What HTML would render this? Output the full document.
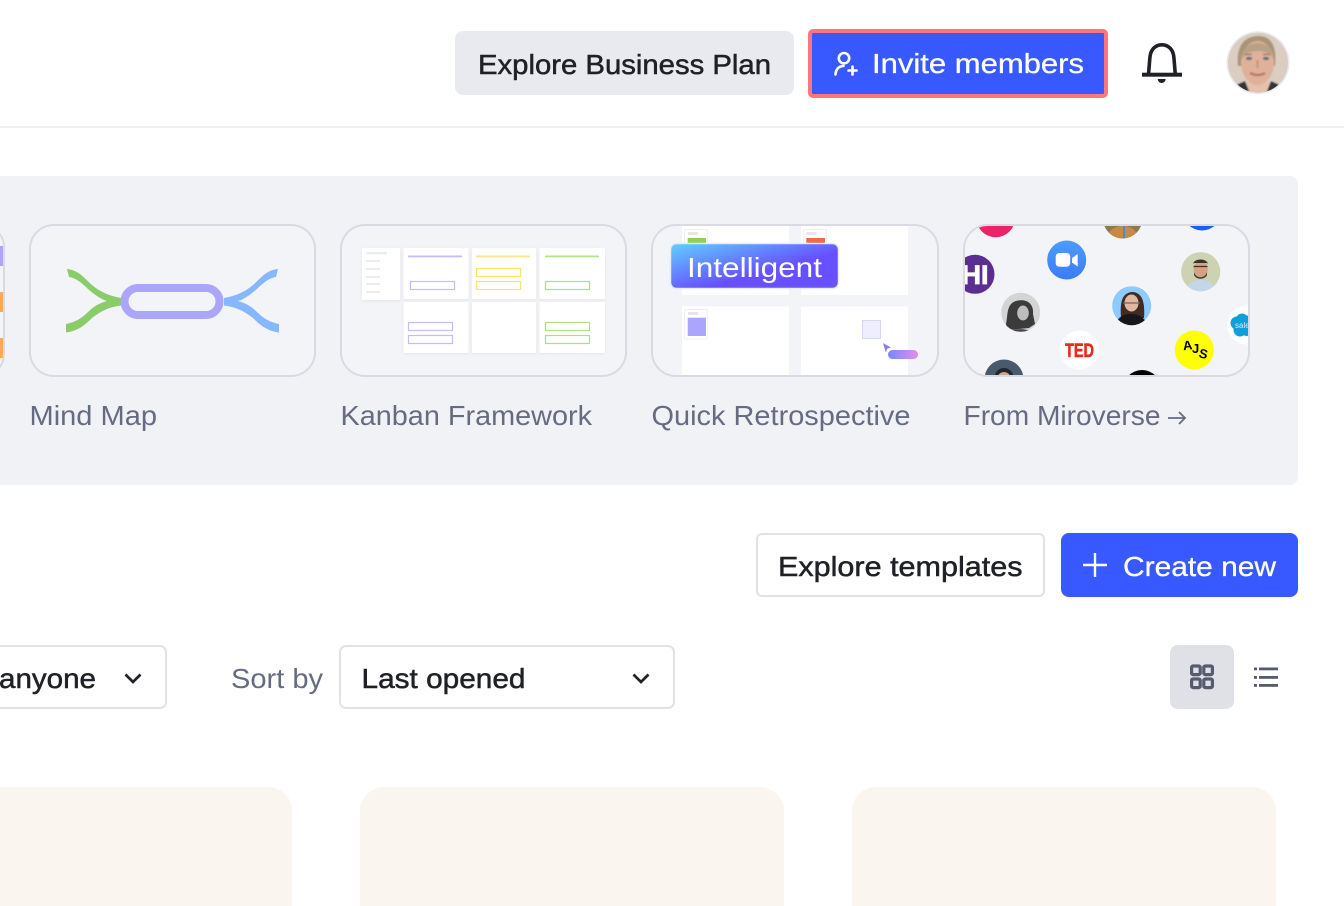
<!DOCTYPE html>
<html lang="en"><head><meta charset="utf-8"><title>Dashboard</title>
<style>
html,body{margin:0;padding:0;background:#fff;width:1344px;height:906px;overflow:hidden}
svg{display:block}
text{font-family:"Liberation Sans",sans-serif;font-size:28px;white-space:pre}
.d{fill:#1f2126;stroke:#1f2126;stroke-width:.5}
.w{fill:#fff;stroke:#fff;stroke-width:.3}
.g{fill:#656b81}
</style></head><body>
<svg width="1344" height="906" viewBox="0 0 1344 906" xmlns="http://www.w3.org/2000/svg">
<defs>
<linearGradient id="badge" x1="0" y1="0" x2="1" y2="1"><stop offset="0" stop-color="#60d0ff"/><stop offset=".6" stop-color="#6650ff"/><stop offset="1" stop-color="#6650ff"/></linearGradient>
<linearGradient id="pill" x1="0" y1="0" x2="1" y2="0"><stop offset="0" stop-color="#7489ff"/><stop offset="1" stop-color="#e58bef"/></linearGradient>
<linearGradient id="zoom" x1="0" y1="0" x2="0" y2="1"><stop offset="0" stop-color="#4f9bff"/><stop offset="1" stop-color="#3a7bfa"/></linearGradient>
<clipPath id="c-retro"><rect x="652" y="225" width="286" height="151" rx="24"/></clipPath>
<clipPath id="c-verse"><rect x="964" y="225" width="285" height="151" rx="24"/></clipPath>
<clipPath id="c-av"><circle cx="1258" cy="62.7" r="30"/></clipPath>
<clipPath id="c1"><circle cx="1200.7" cy="271.7" r="19.5"/></clipPath>
<clipPath id="c2"><circle cx="1020.7" cy="312.3" r="19.5"/></clipPath>
<clipPath id="c3"><circle cx="1131.7" cy="305.7" r="19.5"/></clipPath>
<clipPath id="c4"><circle cx="1122.7" cy="219" r="19.5"/></clipPath>
<clipPath id="c5"><circle cx="1004" cy="379" r="19.5"/></clipPath>
<filter id="sh" x="-10%" y="-10%" width="120%" height="125%"><feDropShadow dx="0" dy="1" stdDeviation="1.5" flood-color="#000" flood-opacity=".06"/></filter>
<filter id="soft"><feGaussianBlur stdDeviation=".35"/></filter>
<filter id="softer"><feGaussianBlur stdDeviation=".9"/></filter>
</defs>

<!-- header -->
<rect x="0" y="0" width="1344" height="127" fill="#fff"/>
<rect x="0" y="126" width="1344" height="2" fill="#f0f1f5"/>
<rect x="455" y="31" width="339" height="64" rx="8" fill="#e9eaef"/>
<text class="d" x="478" y="74" textLength="293" lengthAdjust="spacingAndGlyphs">Explore Business Plan</text>
<rect x="810" y="31" width="296" height="65" rx="3" fill="#3859ff" stroke="#ff757d" stroke-width="4"/>
<g fill="none" stroke="#fff" stroke-width="2.6" stroke-linecap="round">
<circle cx="844" cy="58.2" r="5.2"/>
<path d="M835.5 74.5c.4-5.6 3.4-8.4 8-8.6"/>
<path d="M848.500 70.500h8M852.500 66.500v8"/>
</g>
<text class="w" x="872" y="73" textLength="212" lengthAdjust="spacingAndGlyphs">Invite members</text>

<!-- bell -->
<path d="M1148.5 74.5l1.4-17c.7-8 5.400-12.700 12-12.700s11.300 4.700 12 12.700l1.400 17" fill="none" stroke="#1f2126" stroke-width="3.600"/>
<rect x="1142" y="72.700" width="40" height="4" fill="#1f2126"/>
<path d="M1157.700 79h8c-.3 2.600-2 4-4 4s-3.700-1.400-4-4z" fill="#1f2126"/>

<!-- avatar -->
<circle cx="1258" cy="62.700" r="31.500" fill="#e8e9ee"/>
<g clip-path="url(#c-av)">
<g filter="url(#softer)">
<rect x="1226" y="31" width="64" height="64" fill="#dccdc3"/>
<path d="M1238 66c-2-17 4-29 19-30 16-1 20 13 18 30z" fill="#a99478"/>
<path d="M1244 95l0-13h27v13z" fill="#e6c1ab"/>
<path d="M1232 96l4-11 9-4 6 15zM1284 96l-4-11-9-4-6 15z" fill="#2d3439"/>
<ellipse cx="1257.500" cy="63" rx="16.500" ry="22" fill="#e0b19a"/>
<path d="M1241 60c0-10 7-17 16-17s17 6 17 16c-3-5-9-8-17-8-7 0-12 3-16 9z" fill="#b9a186"/>
<ellipse cx="1249" cy="58.500" rx="3.200" ry="1.600" fill="#5f7280"/>
<ellipse cx="1266" cy="58.500" rx="3.200" ry="1.600" fill="#5f7280"/>
<path d="M1245 54.500h7M1263 54.500h7" stroke="#94745f" stroke-width="1.300"/>
<path d="M1257.500 60v8" stroke="#c9937c" stroke-width="2.200"/>
<path d="M1250 73c5 2.600 11 2.600 15 0" stroke="#b87767" stroke-width="2.400" fill="none"/>
</g>
</g>

<!-- panel -->
<path d="M0 176H1290a8 8 0 0 1 8 8V477a8 8 0 0 1-8 8H0z" fill="#f1f2f6"/>

<!-- clipped card -->
<rect x="-100" y="225" width="104" height="151" rx="22" fill="#f3f4f8" stroke="#d9dae2" stroke-width="2"/>
<rect x="0" y="246" width="3" height="20" fill="#aba5fb"/>
<rect x="0" y="292" width="3" height="20" fill="#ffa95c"/>
<rect x="0" y="338" width="3" height="20" fill="#ffa95c"/>

<!-- mind map -->
<rect x="30" y="225" width="285" height="151" rx="24" fill="#f3f4f8" stroke="#d9dae2" stroke-width="2"/>
<path d="M67 269C79 270 85 279 92 285C100 292 110 296 121 298L121 305.500C108 307 100 312 92 318C85 325 78 331 66 332.500L66 324C76 322 82 318 88 312C94 306 100 303 107 301C100 299 94 294 88 289C82 283 76 278 69 277Z" fill="#8acb6a"/>
<path d="M278 269C266 270 260 279 253 285C245 292 235 296 224 298L224 305.500C237 307 245 312 253 318C260 325 267 331 279 332.500L279 324C269 322 263 318 257 312C251 306 245 303 238 301C245 299 251 294 257 289C263 283 269 278 276 277Z" fill="#86b8ff"/>
<rect x="124.500" y="288" width="95" height="27" rx="13.500" fill="#f3f4f8" stroke="#aba5fb" stroke-width="8"/>
<text class="g" x="29.500" y="425" textLength="127.500" lengthAdjust="spacingAndGlyphs">Mind Map</text>

<!-- kanban -->
<rect x="341" y="225" width="285" height="151" rx="24" fill="#f3f4f8" stroke="#d9dae2" stroke-width="2"/>
<g filter="url(#soft)">
<g fill="#fff" filter="url(#sh)">
<rect x="362" y="248" width="38" height="52"/>
<rect x="403.500" y="248" width="65" height="51" rx="1"/>
<rect x="472" y="248" width="64" height="51" rx="1"/>
<rect x="539.500" y="248" width="65.500" height="51" rx="1"/>
<rect x="403.500" y="302" width="65" height="51" rx="1"/>
<rect x="472" y="302" width="64" height="51" rx="1"/>
<rect x="539.500" y="302" width="65.500" height="51" rx="1"/>
</g>
<g fill="#ececee"><rect x="366" y="252" width="21" height="2.500"/>
<rect x="366" y="260" width="14" height="2"/><rect x="366" y="268" width="14" height="2"/><rect x="366" y="276" width="14" height="2"/><rect x="366" y="283" width="14" height="2"/><rect x="366" y="291" width="14" height="2"/></g>
<rect x="408" y="255.500" width="54" height="1.800" fill="#c7bdfc"/>
<rect x="476" y="255.500" width="54" height="1.800" fill="#fbe48a"/>
<rect x="545" y="255.500" width="54" height="1.800" fill="#b4e08f"/>
<g fill="#fff" stroke-width="1.200">
<g stroke="#c5bcfd"><rect x="410.500" y="281.500" width="44" height="8"/><rect x="408.500" y="322.500" width="44" height="8"/><rect x="408.500" y="335.500" width="44" height="8"/></g>
<g stroke="#fde06a"><rect x="476.500" y="268.500" width="44" height="8"/><rect x="476.500" y="281.500" width="44" height="8"/></g>
<g stroke="#aee083"><rect x="545.500" y="281.500" width="44" height="8"/><rect x="545.500" y="322.500" width="44" height="8"/><rect x="545.500" y="335.500" width="44" height="8"/></g>
</g>
</g>
<text class="g" x="340.500" y="425" textLength="251.500" lengthAdjust="spacingAndGlyphs">Kanban Framework</text>

<!-- retro -->
<rect x="652" y="225" width="286" height="151" rx="24" fill="#f3f4f8"/>
<g clip-path="url(#c-retro)">
<g fill="#fff">
<rect x="682" y="225" width="107" height="70"/><rect x="801" y="225" width="107" height="70"/>
<rect x="682" y="306.500" width="107" height="70"/><rect x="801" y="306.500" width="107" height="70"/>
</g>
<rect x="684.500" y="229.500" width="23" height="16" fill="#fff" stroke="#f1f1f3"/>
<rect x="803.500" y="229.500" width="23" height="16" fill="#fff" stroke="#f1f1f3"/>
<rect x="688" y="232" width="10" height="3" fill="#e6e6e8"/><rect x="806.500" y="232" width="10" height="3" fill="#e6e6e8"/>
<rect x="687.700" y="238" width="18.300" height="6" fill="#8ed154"/>
<rect x="806.300" y="238" width="18.700" height="6" fill="#f2674f"/>
<rect x="684.500" y="309.500" width="23" height="29.500" fill="#fff" stroke="#f1f1f3"/>
<rect x="688" y="312" width="10" height="3" fill="#e6e6e8"/>
<rect x="687.700" y="317.700" width="18.300" height="18.300" fill="#aba5fb"/>
<rect x="862.500" y="320.500" width="18" height="18" fill="#efeefe" stroke="#d9d6fd"/>
<path d="M883 343l8 4.500-3.800 1.100-1.400 3.900z" fill="#8f79f7"/>
<rect x="888" y="350" width="30" height="9" rx="4.500" fill="url(#pill)"/>
</g>
<rect x="652" y="225" width="286" height="151" rx="24" fill="none" stroke="#d9dae2" stroke-width="2"/>
<rect x="670.500" y="243.500" width="168" height="45" rx="6" fill="url(#badge)" stroke="#e9e9f1" stroke-width="1.500"/>
<text x="687" y="277" textLength="135" lengthAdjust="spacingAndGlyphs" fill="#fff">Intelligent</text>
<text class="g" x="651.500" y="425" textLength="259" lengthAdjust="spacingAndGlyphs">Quick Retrospective</text>

<!-- miroverse -->
<rect x="964" y="225" width="285" height="151" rx="24" fill="#f3f4f8"/>
<g clip-path="url(#c-verse)">
<g filter="url(#soft)">
<circle cx="995.700" cy="217.700" r="19.500" fill="#ee2468"/>
<circle cx="1202" cy="211" r="19.500" fill="#1463f3"/>
<circle cx="1122.700" cy="219" r="19.500" fill="#8c7a4e"/>
<g clip-path="url(#c4)"><path d="M1106 240c2-10 9-14 17-14s14 4 16 14z" fill="#c78a45"/><path d="M1124 226v14" stroke="#4c8ad0" stroke-width="2"/></g>
<circle cx="975" cy="274.300" r="19.500" fill="#5c2d91"/>
<text x="961.500" y="284" font-weight="700" textLength="27" lengthAdjust="spacingAndGlyphs" style="font-size:26.500px" fill="#fff" stroke="#fff" stroke-width=".8">HI</text>
<circle cx="1066.700" cy="260" r="19.500" fill="url(#zoom)"/>
<rect x="1055.700" y="253" width="14.500" height="13.700" rx="3.500" fill="#fff"/><path d="M1072 258l5.700-4v12.500l-5.700-4z" fill="#fff"/>

<circle cx="1200.700" cy="271.700" r="19.500" fill="#cfd4b4"/>
<g clip-path="url(#c1)"><rect x="1181" y="252" width="40" height="40" fill="#cdd2b2"/>
<path d="M1186 292c1-8 7-12 15-12s14 4 15 12z" fill="#c6d6ea"/>
<ellipse cx="1200.700" cy="269" rx="7" ry="9" fill="#d4a386"/>
<path d="M1193 264c1-6 14-6 15 0l-1-1h-13z" fill="#3a332e"/>
<path d="M1193.500 266.500h14" stroke="#3a332e" stroke-width="1.300"/>
<path d="M1194 272c2 7 11 7 13 0v3c-2 5-11 5-13 0z" fill="#4c3f36"/></g>

<circle cx="1020.700" cy="312.300" r="19.500" fill="#d4d4d4"/>
<g clip-path="url(#c2)"><path d="M1006 324c2-8 0-20 10-23 12-3 18 4 17 13l2 10-6 4-22 2z" fill="#3a3a3a"/>
<ellipse cx="1023" cy="313" rx="5.800" ry="7.500" fill="#bdbdbd"/>
<path d="M1005 334c3-6 24-7 30 0z" fill="#484848"/></g>

<circle cx="1131.700" cy="305.700" r="19.500" fill="#8dcbfd"/>
<g clip-path="url(#c3)"><path d="M1121 318c-1-14 0-25 11-26 11 0 13 12 12 26z" fill="#3f2b24"/>
<ellipse cx="1131.500" cy="303" rx="7" ry="8.500" fill="#e0b7a1"/>
<path d="M1123 303h17" stroke="#74635d" stroke-width="1.200"/>
<path d="M1115 326c2-9 9-12 16-12s14 3 17 12z" fill="#15151a"/></g>

<circle cx="1246.700" cy="325" r="19.500" fill="#fff"/>
<g fill="#11a0db"><circle cx="1237" cy="323" r="6.500"/><circle cx="1242" cy="319.500" r="6"/><circle cx="1248" cy="322" r="6.500"/><circle cx="1240" cy="330" r="6.500"/><circle cx="1247" cy="330" r="6"/></g>
<text x="1235" y="328" style="font-size:8px" fill="#cfeefa">sales</text>

<circle cx="1079.300" cy="350" r="19.500" fill="#fff"/>
<text x="1065" y="357" font-weight="700" textLength="29" lengthAdjust="spacingAndGlyphs" style="font-size:19px" fill="#e62b1e" stroke="#e62b1e" stroke-width=".6">TED</text>

<circle cx="1194.300" cy="350" r="19.500" fill="#ffff00"/>
<text x="1183" y="350" font-weight="700" style="font-size:13px" fill="#000" transform="rotate(-6 1186 347)">A</text>
<text x="1192" y="353" font-weight="700" style="font-size:13px" fill="#000">J</text>
<text x="1199" y="358" font-weight="700" style="font-size:13px" fill="#000" transform="rotate(14 1202 354)">S</text>

<circle cx="1004" cy="379" r="19.500" fill="#4a5a6c"/>
<g clip-path="url(#c5)"><ellipse cx="1004" cy="376" rx="9" ry="8" fill="#22262e"/><ellipse cx="1004" cy="378" rx="6.500" ry="6" fill="#c9a791"/></g>
<circle cx="1142" cy="389" r="19" fill="#000"/>
</g>
</g>
<rect x="964" y="225" width="285" height="151" rx="24" fill="none" stroke="#d9dae2" stroke-width="2"/>
<text class="g" x="963.500" y="425" textLength="197" lengthAdjust="spacingAndGlyphs">From Miroverse</text>
<path d="M1168 418h16.500M1179 412l6 6-6 6" fill="none" stroke="#656b81" stroke-width="1.800"/>

<!-- action buttons -->
<rect x="757" y="534" width="287" height="62" rx="5" fill="#fff" stroke="#e0e2e8" stroke-width="2"/>
<text class="d" x="778" y="576" textLength="244.500" lengthAdjust="spacingAndGlyphs">Explore templates</text>
<rect x="1061" y="533" width="237" height="64" rx="8" fill="#3859ff"/>
<path d="M1083 565h24M1095 553v24" stroke="#fff" stroke-width="2.400" fill="none"/>
<text class="w" x="1123" y="576" textLength="153" lengthAdjust="spacingAndGlyphs">Create new</text>

<!-- filter row -->
<rect x="-20" y="646" width="186" height="62" rx="6" fill="#fff" stroke="#e0e2e8" stroke-width="2"/>
<text class="d" x="-1" y="688" textLength="97" lengthAdjust="spacingAndGlyphs">anyone</text>
<path d="M125.500 674.500l7.500 7.500 7.500-7.500" fill="none" stroke="#1f2126" stroke-width="2.700"/>
<text class="g" x="231" y="688" textLength="92" lengthAdjust="spacingAndGlyphs">Sort by</text>
<rect x="340" y="646" width="334" height="62" rx="6" fill="#fff" stroke="#e0e2e8" stroke-width="2"/>
<text class="d" x="361.500" y="688" textLength="164" lengthAdjust="spacingAndGlyphs">Last opened</text>
<path d="M633.500 674.500l7.500 7.500 7.500-7.500" fill="none" stroke="#1f2126" stroke-width="2.700"/>

<!-- view toggle -->
<rect x="1170" y="645" width="64" height="64" rx="8" fill="#e0e1e7"/>
<g fill="none" stroke="#565b70" stroke-width="3.200">
<rect x="1191.600" y="666" width="8.600" height="8.600" rx="1.500"/><rect x="1203.800" y="666" width="8.600" height="8.600" rx="1.500"/>
<rect x="1191.600" y="679" width="8.600" height="8.600" rx="1.500"/><rect x="1203.800" y="679" width="8.600" height="8.600" rx="1.500"/>
</g>
<g fill="#565b70">
<rect x="1254" y="667.500" width="3" height="2.800"/><rect x="1259" y="667.500" width="19" height="2.800"/>
<rect x="1254" y="676" width="3" height="2.800"/><rect x="1259" y="676" width="19" height="2.800"/>
<rect x="1254" y="684" width="3" height="2.800"/><rect x="1259" y="684" width="19" height="2.800"/>
</g>

<!-- bottom cards -->
<path d="M-20 787H268a24 24 0 0 1 24 24V906H-20z" fill="#faf6ef"/>
<path d="M360 906V811a24 24 0 0 1 24-24H760a24 24 0 0 1 24 24V906z" fill="#faf6ef"/>
<path d="M852 906V811a24 24 0 0 1 24-24H1252a24 24 0 0 1 24 24V906z" fill="#faf6ef"/>
</svg>
</body></html>
